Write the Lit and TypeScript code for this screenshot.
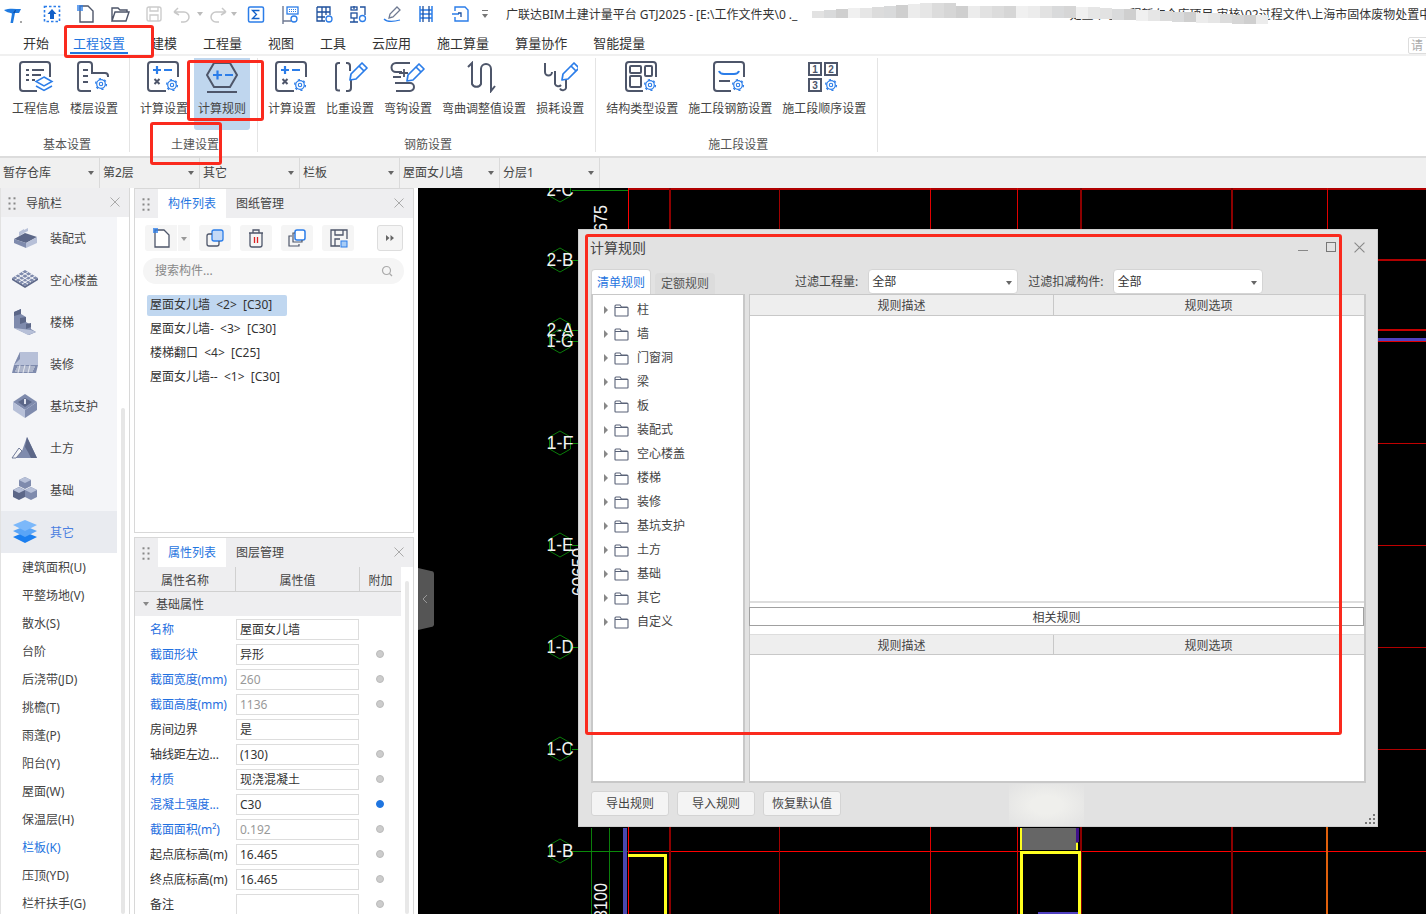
import { LitElement, html, css, svg } from "lit";
import { customElement } from "lit/decorators.js";

const D = "#4e566a";
const B = "#2b7de9";

const gear = (x: number, y: number) => svg`<g fill="none" stroke="${B}">
<circle cx="${x}" cy="${y}" r="1.7" stroke-width="1.1"/>
<circle cx="${x}" cy="${y}" r="4.3" stroke-width="1.2"/>
<circle cx="${x}" cy="${y}" r="5.4" stroke-width="1.4" stroke-dasharray="2.2 3.45"/></g>`;

const openBox = svg`<path d="M20 30H5a3 3 0 0 1-3-3V4a3 3 0 0 1 3-3h24a3 3 0 0 1 3 3v12" fill="none" stroke="${D}" stroke-width="2"/>`;
const pencil = (t: string) => svg`<g transform="${t}" fill="#fff" stroke="${B}" stroke-width="1.7" stroke-linejoin="round"><path d="M9 0l5 5L3 16l-6 1 1-6z"/><path d="M6 3l5 5"/></g>`;

const ribbonIcons: Record<string, unknown> = {
  info: svg`<path d="M19 30H5a3 3 0 0 1-3-3V4a3 3 0 0 1 3-3h24a3 3 0 0 1 3 3v12" fill="none" stroke="${D}" stroke-width="2"/>
    <path d="M8 9h3M14 9h12M8 14h3M14 14h9M8 19h3M14 19h3" stroke="${D}" stroke-width="1.8" fill="none"/>
    <path d="M26 16l8 4.5-8 4.5-8-4.5zM18 25l8 4.5 8-4.5" fill="#fff" stroke="${B}" stroke-width="1.5"/>`,
  floor: svg`<path d="M15 30H5a3 3 0 0 1-3-3V4a3 3 0 0 1 3-3h8a3 3 0 0 1 3 3v8h13a3 3 0 0 1 3 3v1" fill="none" stroke="${D}" stroke-width="2"/>
    <path d="M7 9h5M7 15h5M7 21h5" stroke="${D}" stroke-width="1.8"/>${gear(25, 23)}`,
  calc: svg`${openBox}<path d="M7 9h8M11 5v8M18 9h8" stroke="${B}" stroke-width="2.2"/>
    <path d="M8.5 18l5 5M13.5 18l-5 5" stroke="${D}" stroke-width="2"/>${gear(26, 24)}`,
  rule: svg`<path d="M10 2h16l7 12-7 12H10L3 14z" fill="none" stroke="${D}" stroke-width="2"/>
    <path d="M9 14h9M13.5 9.5v9M21 14h8" stroke="${B}" stroke-width="2.2"/>
    <path d="M3 31h30" stroke="${D}" stroke-width="2"/>`,
  weight: svg`<path d="M8 2H6.500A2.500 2.500 0 0 0 4 4.500V27a2.500 2.500 0 0 0 2.500 2.500H8M14 2h1a3 3 0 0 1 3 3v5M19 19v8a3 3 0 0 1-3 3h-2" fill="none" stroke="${D}" stroke-width="2"/>${pencil("translate(21 2)")}`,
  hook: svg`<path d="M20 2H6a3 3 0 0 0 0 9h6M3 16h8M5 22h15a3.500 3.500 0 0 1 0 8H6" fill="none" stroke="${D}" stroke-width="2"/>
    <path d="M14 8v8M9 12h9" stroke="${D}" stroke-width="1.800"/>${pencil("translate(20 3)")}`,
  bend: svg`<path d="M2 6l4-4v21a5 5 0 0 0 9 0V8a5 5 0 0 1 10 0v22l4-5" fill="none" stroke="${D}" stroke-width="2"/>`,
  loss: svg`<path d="M3 2v9a3.500 3.500 0 0 0 7 0M13 10v13a3.500 3.500 0 0 0 6 1M24 16v11a3.200 3.200 0 0 1-6 .500" fill="none" stroke="${D}" stroke-width="2"/>${pencil("translate(23 2)")}`,
  struct: svg`<path d="M19 30H5a3 3 0 0 1-3-3V4a3 3 0 0 1 3-3h24a3 3 0 0 1 3 3v12" fill="none" stroke="${D}" stroke-width="2"/>
    <rect x="6" y="5" width="11" height="7" rx="1" fill="none" stroke="${D}" stroke-width="2"/>
    <rect x="21" y="5" width="7" height="10" rx="1" fill="none" stroke="${D}" stroke-width="2"/>
    <rect x="6" y="15" width="11" height="11" rx="1" fill="none" stroke="${D}" stroke-width="2"/>${gear(26, 24)}`,
  rebar: svg`<path d="M19 30H5a3 3 0 0 1-3-3V4a3 3 0 0 1 3-3h24a3 3 0 0 1 3 3v12" fill="none" stroke="${D}" stroke-width="2"/>
    <path d="M7 10c1 3 3 3 5 3h10c2 0 4 0 5-3" fill="none" stroke="${B}" stroke-width="2"/>
    <path d="M7 20h11" stroke="${D}" stroke-width="2"/>${gear(26, 24)}`,
  order: svg`<g fill="none" stroke="${D}" stroke-width="2"><rect x="3" y="2" width="12" height="12"/><rect x="19" y="2" width="12" height="12"/><rect x="3" y="18" width="12" height="12"/></g>
    <g font-family="Liberation Sans, sans-serif" font-size="10" font-weight="700" fill="${D}" text-anchor="middle"><text x="9" y="12">1</text><text x="25" y="12">2</text><text x="9" y="28">3</text></g>${gear(25, 24)}`,
};

const ribbon = [
  { name: "基本设置", items: [["工程信息", "info"], ["楼层设置", "floor"]] },
  { name: "土建设置", items: [["计算设置", "calc"], ["计算规则", "rule"]] },
  { name: "钢筋设置", items: [["计算设置", "calc"], ["比重设置", "weight"], ["弯钩设置", "hook"], ["弯曲调整值设置", "bend"], ["损耗设置", "loss"]] },
  { name: "施工段设置", items: [["结构类型设置", "struct"], ["施工段钢筋设置", "rebar"], ["施工段顺序设置", "order"]] },
];

const G = "#6f7a92";
const quick: unknown[] = [
  svg`<rect x="2.500" y="2.500" width="15" height="15" fill="none" stroke="${B}" stroke-width="1.600" stroke-dasharray="2.500 2"/><path d="M10 5l4.500 5H12v5H8v-5H5.500z" fill="#1260c8"/>`,
  svg`<path d="M4 2h8l5 5v11H4z" fill="#fff" stroke="${D}" stroke-width="1.400"/><rect x="1" y="1" width="6" height="6" fill="${B}" opacity=".7"/>`,
  svg`<path d="M2 17V4h6l2 2h7v2M2 17l3-9h14l-3 9z" fill="none" stroke="${D}" stroke-width="1.400"/>`,
  svg`<rect x="3" y="3" width="14" height="14" rx="2" fill="none" stroke="#ccc" stroke-width="1.400"/><path d="M6 3v4h8V3M6 17v-6h8v6" fill="none" stroke="#ccc" stroke-width="1.300"/>`,
  svg`<path d="M1 8l4-4M1 8l5 3M1.500 8H11a5 5 0 0 1 0 10H8" fill="none" stroke="#c8c8c8" stroke-width="1.500"/>`,
  svg`<path d="M19 8l-4-4M19 8l-5 3M18.500 8H9a5 5 0 0 0 0 10h3" fill="none" stroke="#c8c8c8" stroke-width="1.500"/>`,
  svg`<rect x="2.500" y="3" width="15" height="15" rx="1.500" fill="none" stroke="${B}" stroke-width="1.500"/><path d="M13.500 6.500h-7l4 4-4 4h7" fill="none" stroke="#1260c8" stroke-width="1.300"/>`,
  svg`<path d="M3 2v15h8M3 17v3" fill="none" stroke="${G}" stroke-width="1.400"/><rect x="7" y="3" width="11" height="7" fill="none" stroke="${B}" stroke-width="1.300"/><path d="M9 5.500h7M9 7.500h7" stroke="${B}" stroke-width="1" stroke-dasharray="1 1"/><circle cx="14" cy="15" r="3" fill="none" stroke="${B}" stroke-width="1.300"/>`,
  svg`<path d="M3 3h13v8M3 3v14h8M3 8h13M3 13h8M8 3v14M12 3v8" fill="none" stroke="#1d4f9c" stroke-width="1.300"/><circle cx="15" cy="15" r="3" fill="none" stroke="${B}" stroke-width="1.300"/>`,
  svg`<g fill="none" stroke="#1d4f9c" stroke-width="1.300"><rect x="3" y="9" width="6" height="5"/><path d="M6 2v3M6 14v4M2 18h8"/><rect x="3" y="3" width="6" height="3"/><path d="M12 3h5v8"/></g><circle cx="14.500" cy="14.500" r="3" fill="none" stroke="${B}" stroke-width="1.300"/>`,
  svg`<path d="M2 15c3 3 9 3 16 1" fill="none" stroke="${B}" stroke-width="1.300"/><path d="M15 3l3 3-7 7-4 1 1-4z" fill="none" stroke="${G}" stroke-width="1.300"/>`,
  svg`<path d="M4 2v16M16 2v16M4 6h12M4 10h12M4 14h12" fill="none" stroke="${B}" stroke-width="1.500"/><path d="M7 2v16M13 2v16" stroke="#1d4f9c" stroke-width="1.300"/>`,
  svg`<path d="M5 7V3h10l3 3v11H5v-4M2 10h7" fill="none" stroke="${B}" stroke-width="1.400"/><path d="M11 13V9h-3" fill="none" stroke="#1d4f9c" stroke-width="1.300"/>`,
];

const A = "#b7c0d8", M = "#7f8bad", K = "#5c6788";
const navIcons: unknown[] = [
  svg`<path d="M7 8l5-3v4l-5 3zM12 6l4-2v3l-4 2z" fill="${A}"/><path d="M2 15l11-6 12 4-11 6z" fill="${K}"/><path d="M2 15v4l12 5v-5z" fill="${M}"/><path d="M25 13v6l-11 5v-5z" fill="${A}"/>`,
  svg`<path d="M13 4l13 8-13 8L0 12z" fill="${M}"/><path d="M0 12v2l13 8 13-8v-2l-13 8z" fill="${K}"/><path d="M6 8l13 8M10 6l13 8M3 10l13 8M20 8L7 16M16 6L3 14M23 10l-13 8" stroke="#f4f5f8" stroke-width="1"/>`,
  svg`<path d="M2 4l7-3v5l5 3v5l5 3v4l5 3-7 3L2 20z" fill="${M}"/><path d="M2 4l7-3v5l-7 2zM8 10l6-1v5l-6 2zM14 16l5-1v4l-5 2z" fill="${K}"/><path d="M2 20l14 7 8-3-5-2z" fill="${A}"/>`,
  svg`<path d="M8 2h18v13H2z" fill="${A}"/><path d="M2 15L8 2v7z" fill="${M}"/><path d="M2 15h24l-2 8H0z" fill="${M}"/><path d="M5 17h18M4 19h18M3 21h18M8 15l-2 8M13 15l-2 8M18 15l-2 8" stroke="#f4f5f8" stroke-width=".8"/>`,
  svg`<path d="M13 2l12 8-12 8L1 10z" fill="${M}"/><path d="M1 10v8l12 8V18z" fill="${A}"/><path d="M25 10v8l-12 8V18z" fill="${M}"/><path d="M13 6l7 4-7 5-7-5z" fill="${K}"/><path d="M12 7h2v5h-2z" fill="#dfe3ee"/>`,
  svg`<path d="M0 24l7-10 3 3 5-14 10 21z" fill="${M}"/><path d="M15 3l-2 10 3 5 3 6h6z" fill="${K}"/><path d="M0 24l7-10 3 3-6 7z" fill="#f4f5f8" stroke="${K}" stroke-width=".8"/>`,
  svg`<path d="M13 1l6 3v6l-6 3-6-3V4z" fill="${M}"/><path d="M7 11l6 3v7l-6 3-6-3v-7z" fill="${K}"/><path d="M19 11l6 3v7l-6 3-6-3v-7z" fill="${M}"/><path d="M13 1l6 3-6 3-6-3zM7 11l6 3-6 3-6-3zM19 11l6 3-6 3-6-3z" fill="${A}"/>`,
  svg`<path d="M13 14l12 5-12 6L1 19z" fill="#1c7fef"/><path d="M13 8l12 5-12 6L1 13z" fill="#5aa5f7"/><path d="M13 2l12 5-12 6L1 7z" fill="#7cb8fa"/>`,
];
const navItems = ["装配式", "空心楼盖", "楼梯", "装修", "基坑支护", "土方", "基础", "其它"];
const navSubs = ["建筑面积(U)", "平整场地(V)", "散水(S)", "台阶", "后浇带(JD)", "挑檐(T)", "雨蓬(P)", "阳台(Y)", "屋面(W)", "保温层(H)", "栏板(K)", "压顶(YD)", "栏杆扶手(G)"];

const tools: unknown[] = [
  svg`<path d="M5 3h9l5 5v12H5z" fill="#fff" stroke="${D}" stroke-width="1.300"/><rect x="3" y="1" width="5" height="5" fill="${B}" opacity=".75"/>`,
  svg`<rect x="8" y="3" width="11" height="11" rx="2" fill="#c4d9f6" stroke="${B}" stroke-width="1.300"/><path d="M8 7H5a2 2 0 0 0-2 2v8a2 2 0 0 0 2 2h8a2 2 0 0 0 2-2v-3" fill="none" stroke="${D}" stroke-width="1.300"/>`,
  svg`<path d="M4 6h14M8 6V3h6v3M5 6v12a2 2 0 0 0 2 2h8a2 2 0 0 0 2-2V6" fill="none" stroke="${D}" stroke-width="1.300"/><path d="M9.500 10v6M12.500 10v6" stroke="#d22" stroke-width="1.300"/>`,
  svg`<rect x="9" y="3" width="10" height="10" rx="2" fill="#fff" stroke="${B}" stroke-width="1.500"/><path d="M9 6H7v9h9v-2M6 9H3v10h10v-2" fill="none" stroke="${D}" stroke-width="1.200"/>`,
  svg`<path d="M20 12V3H4v16h9M8 3v5h8V3M8 19v-7h5" fill="none" stroke="${D}" stroke-width="1.300"/><rect x="14" y="14" width="6" height="6" fill="#a8ccf5" stroke="${B}"/>`,
];

const props: [string, string, boolean, string, string][] = [
  ["名称", "屋面女儿墙", true, "", "none"],
  ["截面形状", "异形", true, "", "off"],
  ["截面宽度(mm)", "260", true, "muted", "off"],
  ["截面高度(mm)", "1136", true, "muted", "off"],
  ["房间边界", "是", false, "", "none"],
  ["轴线距左边...", "(130)", false, "", "off"],
  ["材质", "现浇混凝土", true, "", "off"],
  ["混凝土强度...", "C30", true, "", "on"],
  ["截面面积(m²)", "0.192", true, "muted", "off"],
  ["起点底标高(m)", "16.465", false, "", "off"],
  ["终点底标高(m)", "16.465", false, "", "off"],
  ["备注", "", false, "", "off"],
];

const treeItems = ["柱", "墙", "门窗洞", "梁", "板", "装配式", "空心楼盖", "楼梯", "装修", "基坑支护", "土方", "基础", "其它", "自定义"];

const axes: [string, number][] = [["2-C", 190], ["2-B", 260], ["2-A", 330], ["1-G", 341], ["1-F", 443], ["1-E", 545], ["1-D", 647], ["1-C", 749], ["1-B", 851]];
const vLines: [number, string, number][] = [
  [628, "#ff0000", 1], [670, "#8c0000", 2], [779, "#a00000", 1], [930, "#e00000", 1], [1017, "#e00000", 1],
  [1081, "#8c0000", 2], [1232, "#8c0000", 2],
];
const hLines: [number, string, number][] = [
  [189, "#b00000", 2], [260, "#b00000", 2], [330, "#c80000", 2], [341, "#e00000", 1], [443, "#c00000", 1],
  [545, "#c00000", 1], [647, "#b00000", 1], [749, "#b00000", 1],
];
const smudge: [number, number, number, number, string][] = (() => {
  const out: [number, number, number, number, string][] = [];
  const shades = ["#e2e2e2", "#d6d6d6", "#ececec", "#dcdcdc", "#cfcfcf", "#e6e6e6", "#d9dadb", "#f0f0f0"];
  for (let x = 812, i = 0; x < 1260; x += 12, i++) {
    const top = x < 950 ? 11 - Math.min(8, (x - 812) / 14) : x < 1060 ? 6 : 6 + Math.min(9, (x - 1060) / 20);
    const bottom = x < 1060 ? 18 : 18 + Math.min(6, (x - 1060) / 30);
    out.push([x, top, 12, bottom - top, shades[(i * 5 + (i % 3)) % shades.length]]);
  }
  return out;
})();

@customElement("app-root")
export class AppRoot extends LitElement {
  static styles = css`
    :host { display: block; width: 1426px; height: 914px; position: relative; overflow: hidden; background: #fff; color: #333; font: 12px/16px "Noto Sans", "Noto Sans CJK SC", sans-serif; }
    * { box-sizing: border-box; }
    svg { display: block; flex: none; }
    .titlebar { height: 28px; display: flex; align-items: center; white-space: nowrap; overflow: hidden; position: relative; }
    .logo { width: 35px; flex: none; padding-left: 4px; }
    .qa { width: 34px; flex: none; display: flex; justify-content: center; align-items: center; }
    .qa.caret { justify-content: flex-start; padding-left: 2px; }
    .qa-caret { width: 0; height: 0; border: 3px solid transparent; border-top: 4px solid #bbb; border-bottom: 0; margin-left: 4px; }
    .qa-more { width: 16px; flex: none; display: flex; justify-content: center; }
    .title { margin-left: 13px; font-size: 12px; flex: none; padding-top: 2px; }
    .title-gap { display: inline-block; width: 272px; }
    .smudge { position: absolute; left: 0; top: 0; }
    .tabs { height: 28px; display: flex; gap: 26px; padding: 2px 0 0 23px; border-bottom: 2px solid #f0f0f0; font-size: 13px; line-height: 26px; position: relative; }
    .tab { position: relative; }
    .tab:first-child { margin-right: -2px; }
    .tab.on { color: #1f75e0; }
    .tab.on::after { content: ""; position: absolute; left: -3px; right: -3px; bottom: 0; height: 2px; background: #1f75e0; }
    .req { position: absolute; right: -8px; top: 9px; width: 26px; height: 17px; border: 1px solid #ddd; border-radius: 2px; color: #aaa; font-size: 12px; line-height: 15px; padding-left: 2px; overflow: hidden; }
    .ribbon { height: 100px; display: flex; padding-top: 2px; }
    .group { display: flex; flex-direction: column; height: 94px; padding: 0 11px 0 10px; border-right: 1px solid #e4e4e4; align-items: center; }
    .group:first-child { padding-left: 12px; }
    .btns { display: flex; gap: 10px; height: 72px; flex: none; }
    .rb { display: flex; flex-direction: column; align-items: center; padding-top: 3px; white-space: nowrap; height: 72px; width: max-content; color: #444; }
    .rb svg { margin-bottom: 8px; margin-left: -1px; }
    .rb.sel { background: #bfd6ee; border-radius: 0 0 3px 3px; margin: 0 -4px; padding: 3px 4px 0; }
    .glabel { margin: 5px 0 0 4px; line-height: 20px; color: #555; }
    .selectors { height: 32px; background: #f0f0f0; border-top: 2px solid #dcdcdc; display: flex; }
    .sel-cell { width: 100px; border-right: 1px solid #dadada; padding-left: 3px; line-height: 29px; position: relative; color: #444; }
    .arrow { position: absolute; width: 0; height: 0; border: 3px solid transparent; border-top: 4px solid #666; border-bottom: 0; right: 5px; top: 13px; }
    .main { height: 726px; display: flex; }
    .nav { width: 130px; flex: none; border-left: 1px solid #e2e2e2; border-right: 1px solid #d8d8d8; position: relative; overflow: hidden; }
    .phead { height: 29px; background: #eeeef0; display: flex; align-items: center; position: relative; color: #444; }
    .grip { width: 23px; flex: none; padding-left: 6px; }
    .x { position: absolute; right: 9px; top: 9px; }
    .nav-title { padding: 2px 0 0 2px; }
    .nav-list { width: 116px; }
    .nav-item { height: 42px; background: #f4f5f8; display: flex; align-items: center; padding-left: 10px; gap: 11px; color: #444; }
    .nav-txt { padding-top: 2px; }
    .nav-item.on { background: #e9ebf0; color: #4b7fe0; }
    .nav-sub { height: 28px; line-height: 30px; padding-left: 21px; color: #444; }
    .nav-sub.on { color: #1f75e0; }
    .nscroll { position: absolute; left: 120px; top: 220px; bottom: 0; width: 4px; background: #e6e6e6; border-radius: 2px; }
    .side { width: 280px; margin-left: 4px; flex: none; display: flex; flex-direction: column; gap: 4px; }
    .panel { border: 1px solid #d8d8d8; border-top-width: 1px; position: relative; overflow: hidden; }
    .comp { height: 345px; flex: none; }
    .prop { flex: 1; border-bottom: 0; }
    .ptab { width: 68px; height: 100%; text-align: center; line-height: 30px; background: #fff; color: #1f75e0; }
    .ptab.off { background: none; color: #444; width: 68px; }
    .toolbar { display: flex; gap: 9px; padding: 7px 0 0 10px; height: 33px; }
    .tb { width: 32px; height: 26px; background: #f5f5f5; border-radius: 3px; display: flex; align-items: center; justify-content: center; }
    .tb-new { border-radius: 3px 0 0 3px; }
    .tb-drop { width: 12px; height: 26px; background: #f5f5f5; margin-left: -8px; position: relative; }
    .tb-drop .arrow { right: 3px; top: 12px; border-top-color: #999; }
    .tb-more { width: 26px; margin-left: 14px; border: 1px solid #ddd; }
    .search { margin: 7px 9px 0 8px; height: 26px; background: #f5f5f5; border-radius: 13px; display: flex; justify-content: space-between; align-items: center; padding: 0 11px 0 12px; color: #888; }
    .clist { padding-top: 9px; padding-left: 12px; }
    .crow { height: 24px; line-height: 23px; }
    .crow span { display: inline-block; height: 21px; line-height: 20px; padding: 0 3px; border-radius: 2px; white-space: pre; }
    .crow.on span { background: #c0d7f0; min-width: 140px; }
    .pt-head { display: flex; height: 25px; width: 266px; background: #eeeef0; border-bottom: 1px solid #d0d0d0; line-height: 27px; text-align: center; color: #444; }
    .pt-head div { border-right: 1px solid #d0d0d0; }
    .c1 { width: 101px; } .c2 { width: 124px; } .c3 { width: 41px; border-right: 0 !important; }
    .pgroup { width: 266px; height: 24px; background: #eeeef0; line-height: 26px; padding-left: 21px; position: relative; color: #444; }
    .pgroup .arrow { left: 8px; top: 10px; border-top-color: #888; }
    .prows { padding-top: 1px; }
    .prow { display: flex; height: 25px; width: 266px; align-items: center; }
    .plabel { width: 101px; padding-left: 15px; white-space: nowrap; flex: none; letter-spacing: -.1px; }
    .plabel.blue { color: #1f6fe0; }
    .pval { width: 123px; height: 21px; border: 1px solid #ddd; line-height: 19px; padding-left: 3px; flex: none; }
    .pval.muted { color: #999; }
    .dot { width: 8px; height: 8px; border-radius: 50%; margin: -1px 0 0 17px; background: #ccc; border: 1px solid #bbb; }
    .dot.on { background: #1f75e0; border-color: #1f75e0; }
    .dot.none { visibility: hidden; }
    .pscroll { position: absolute; left: 270px; top: 43px; bottom: 0; width: 4px; background: #e8e8e8; border-radius: 2px; }
    .canvas { position: absolute; left: 418px; top: 188px; width: 1008px; height: 726px; background: #000; overflow: hidden; }
    .handle { position: absolute; left: 0; top: 380px; }
    .dialog { position: absolute; left: 160px; top: 41px; width: 800px; height: 598px; background: #e2e2e2; border: 1px solid #cfcfcf; display: flex; flex-direction: column; padding: 0 12px; }
    .patch { position: absolute; left: 430px; bottom: 0; width: 75px; height: 42px; background: radial-gradient(ellipse at center, #efefec 30%, #e2e2e2 100%); }
    .dtitle { height: 38px; flex: none; display: flex; align-items: center; font-size: 14px; color: #444; position: relative; margin-left: -1px; padding-bottom: 2px; }
    .wctl { position: absolute; right: 0; top: 12px; display: flex; gap: 18px; }
    .dfilter { height: 26px; flex: none; display: flex; align-items: flex-end; color: #444; }
    .dtab { width: 60px; height: 25px; background: #fff; border-radius: 4px 4px 0 0; text-align: center; line-height: 26px; color: #1f75e0; border: 1px solid #d4d4d4; border-bottom: 0; }
    .dtab.off { height: 21px; line-height: 22px; background: #dcdcdc; color: #555; border: 0; margin-left: 4px; }
    .flabel { margin-left: 80px; height: 26px; line-height: 28px; white-space: nowrap; }
    .flabel.second { margin-left: 10px; }
    .fsel { width: 150px; height: 25px; margin-left: 10px; background: #fff; border: 1px solid #d4d4d4; border-radius: 4px; padding-left: 3px; line-height: 24px; position: relative; color: #333; }
    .fsel .arrow { right: 5px; top: 11px; }
    .dbody { height: 489px; flex: none; display: flex; gap: 4px; }
    .tree { width: 154px; flex: none; background: #fff; border: 2px solid #c8c8c8; border-top-width: 1px; padding-top: 3px; }
    .trow { height: 24px; display: flex; align-items: center; padding-left: 11px; gap: 6px; color: #444; }
    .tri { width: 0; height: 0; border: 4px solid transparent; border-left: 4px solid #888; border-right: 0; }
    .tree-txt { margin-left: 2px; }
    .rpanel { width: 617px; flex: none; background: #fff; border: 2px solid #c8c8c8; border-top-width: 1px; border-left-width: 1px; display: flex; flex-direction: column; }
    .rhead { height: 21px; flex: none; display: flex; background: #eeeeee; border-bottom: 1px solid #c8c8c8; text-align: center; line-height: 22px; color: #444; }
    .rhead div:first-child { width: 304px; border-right: 1px solid #c8c8c8; flex: none; }
    .rhead div:last-child { flex: 1; margin-right: 1px; }
    .rbody { height: 287px; flex: none; border-bottom: 2px solid #ddd; }
    .related { height: 19px; flex: none; margin: 4px 0 0 -1px; border: 1px solid #a0a0a0; text-align: center; line-height: 19px; color: #444; }
    .rhead.two { margin-top: 8px; border-top: 1px solid #ddd; line-height: 21px; }
    .dfoot { display: flex; gap: 8px; margin-top: 8px; flex: none; }
    .dbtn { width: 78px; height: 25px; background: #f4f4f4; border: 1px solid #d4d4d4; border-radius: 3px; text-align: center; line-height: 24px; color: #444; }
    .dgrip { position: absolute; right: 2px; bottom: 2px; }
    .ann { position: absolute; border: 3px solid #fa2a1e; border-radius: 3px; pointer-events: none; }
    .a1 { left: 64px; top: 25px; width: 90px; height: 33px; }
    .a2 { left: 187px; top: 60px; width: 77px; height: 61px; }
    .a3 { left: 150px; top: 122px; width: 72px; height: 43px; }
    .a4 { left: 585px; top: 234px; width: 757px; height: 501px; }
  `;

  private x(size = 10, c = "#aaa") {
    return html`<svg width="${size}" height="${size}" viewBox="0 0 10 10"><path d="M.5.5l9 9M9.500.5l-9 9" stroke="${c}" stroke-width="1" fill="none"/></svg>`;
  }
  private grip() {
    const dots = [1, 5, 9].flatMap((y) => [1.5, 6.5].map((x) => svg`<rect x="${x}" y="${y * 1.3}" width="2" height="2" fill="#888"/>`));
    return html`<div class="grip"><svg width="10" height="14">${dots}</svg></div>`;
  }

  private renderCanvas() {
    return html`<svg width="1008" height="726" viewBox="418 188 1008 726" fill="none">
      <g shape-rendering="crispEdges">
        ${hLines.map(([y, c, w]) => svg`<path d="M628 ${y}H1426" stroke="${c}" stroke-width="${w}"/>`)}
        <path d="M628 339.500H1426" stroke="#5040c0" stroke-width="3"/>
        <path d="M628 851H1426" stroke="#ff0000"/>
        ${vLines.map(([x, c, w]) => svg`<path d="M${x} 188V914" stroke="${c}" stroke-width="${w}"/>`)}
        <path d="M1327 188V600" stroke="#e00000"/><path d="M1327 820V914" stroke="#e0600c" stroke-width="2"/>
        <path d="M591 828V914M609 828V914" stroke="#0a7d0a"/>
        ${axes.map(([, y]) => svg`<path d="M572 ${y}H${y === 851 || y === 190 ? 628 : 610}" stroke="#0a8a0a"/>`)}
        <rect x="1021" y="828" width="57" height="22" fill="#666"/>
        <path d="M1021 828V850" stroke="#ffff20" stroke-width="2"/>
        <path d="M1077 828V842" stroke="#40108a" stroke-width="3"/><path d="M1077 843V850" stroke="#ffff20" stroke-width="2"/>
        <path d="M625 828V914" stroke="#4a48b0" stroke-width="4"/>
        <path d="M628 855H665.500V914" stroke="#ffff20" stroke-width="3"/>
        <path d="M1021.500 914V852.500H1079.500V914" stroke="#ffff20" stroke-width="3"/>
        <path d="M1038 913H1078" stroke="#5040c0" stroke-width="2"/>
      </g>
      ${axes.map(([t, y]) => svg`
        <path d="M560 ${y - 12}l10.500 6v12l-10.500 6-10.500-6v-12z" stroke="#0a7d0a"/>
        <text x="560" y="${y + 6}" text-anchor="middle" fill="#f2f2f2" font-family="Liberation Sans, sans-serif" font-size="18" textLength="27" lengthAdjust="spacingAndGlyphs">${t}</text>`)}
      <g fill="#f2f2f2" font-family="Liberation Sans, sans-serif" font-size="19">
        <text transform="translate(607 232) rotate(-90)" textLength="27" lengthAdjust="spacingAndGlyphs">675</text>
        <text transform="translate(607 919) rotate(-90)" textLength="36" lengthAdjust="spacingAndGlyphs">3100</text>
        <text transform="translate(585 596) rotate(-90)" textLength="48" lengthAdjust="spacingAndGlyphs">60650</text>
      </g>
    </svg>`;
  }

  private renderDialog() {
    const folder = html`<svg width="15" height="13" viewBox="0 0 15 13"><path d="M1 11.500V2a1 1 0 0 1 1-1h4l1.500 2H13a1 1 0 0 1 1 1v7.500a.5.5 0 0 1-.5.5h-12a.5.5 0 0 1-.5-.5zM1 3.500h13" fill="none" stroke="#5a6378" stroke-width="1.100"/></svg>`;
    const head = (cls = "") => html`<div class="rhead ${cls}"><div>规则描述</div><div>规则选项</div></div>`;
    const gd = [[8, 0], [4, 4], [8, 4], [0, 8], [4, 8], [8, 8]];
    return html`<div class="dialog">
      <div class="patch"></div>
      <div class="dtitle">计算规则
        <div class="wctl">
          <svg width="10" height="11"><path d="M0 8.500h10" stroke="#888"/></svg>
          <svg width="10" height="11"><rect x=".5" y=".5" width="9" height="9" fill="none" stroke="#777"/></svg>
          <svg width="11" height="11" viewBox="0 0 10 10"><path d="M.5.5l9 9M9.500.5l-9 9" stroke="#888" fill="none"/></svg>
        </div>
      </div>
      <div class="dfilter">
        <div class="dtab">清单规则</div><div class="dtab off">定额规则</div>
        <div class="flabel">过滤工程量:</div><div class="fsel">全部<i class="arrow"></i></div>
        <div class="flabel second">过滤扣减构件:</div><div class="fsel">全部<i class="arrow"></i></div>
      </div>
      <div class="dbody">
        <div class="tree">${treeItems.map((t) => html`<div class="trow"><i class="tri"></i>${folder}<span class="tree-txt">${t}</span></div>`)}</div>
        <div class="rpanel">
          ${head()}<div class="rbody"></div>
          <div class="related">相关规则</div>
          ${head("two")}
        </div>
      </div>
      <div class="dfoot"><div class="dbtn">导出规则</div><div class="dbtn">导入规则</div><div class="dbtn">恢复默认值</div></div>
      <svg class="dgrip" width="10" height="10">${gd.map(([x, y]) => svg`<rect x="${x}" y="${y}" width="2" height="2" fill="#777"/>`)}</svg>
    </div>`;
  }

  render() {
    const qa = quick.map((q, i) => html`<div class="qa ${i === 4 || i === 5 ? "caret" : ""}"><svg width="20" height="20" viewBox="0 0 20 20">${q}</svg>${i === 4 || i === 5 ? html`<i class="qa-caret"></i>` : ""}</div>`);
    return html`
      <div class="titlebar">
        <div class="logo"><svg width="24" height="20" viewBox="0 0 24 20"><path d="M0 6C5 4 11 5 17 5l-2 4h-4L9 19H6.500L8 9.500C5 8.500 2 8 0 6z" fill="#1f7ae0"/><path d="M11 6l-2 3h2l1-3z" fill="#0e4fa8"/><circle cx="17" cy="18" r="1" fill="#888"/></svg></div>
        ${qa}
        <div class="qa-more"><svg width="8" height="10" viewBox="0 0 8 10"><path d="M1 1.500h6" stroke="#777"/><path d="M1 5h6L4 9z" fill="#777"/></svg></div>
        <div class="title">广联达BIM土建计量平台 GTJ2025 - [E:\\工作文件夹\\0 ._<span class="title-gap"></span>处置中心工程暂存仓库项目 审核\\02过程文件\\上海市固体废物处置中心工程</div>
        <svg class="smudge" width="1426" height="28" shape-rendering="crispEdges">${smudge.map(([x, y, w, h, c]) => svg`<rect x="${x}" y="${y}" width="${w}" height="${h}" fill="${c}"/>`)}</svg>
      </div>
      <div class="tabs">
        ${["开始", "工程设置", "建模", "工程量", "视图", "工具", "云应用", "施工算量", "算量协作", "智能提量"].map((t, i) => html`<div class="tab ${i === 1 ? "on" : ""}">${t}</div>`)}
        <div class="req">请输</div>
      </div>
      <div class="ribbon">
        ${ribbon.map((g) => html`<div class="group">
          <div class="btns">${g.items.map(([t, ic]) => html`<div class="rb ${ic === "rule" ? "sel" : ""}"><svg width="36" height="32" viewBox="0 0 36 32">${ribbonIcons[ic]}</svg>${t}</div>`)}</div>
          <div class="glabel">${g.name}</div>
        </div>`)}
      </div>
      <div class="selectors">
        ${["暂存仓库", "第2层", "其它", "栏板", "屋面女儿墙", "分层1"].map((t) => html`<div class="sel-cell">${t}<i class="arrow"></i></div>`)}
      </div>
      <div class="main">
        <div class="nav">
          <div class="phead">${this.grip()}<span class="nav-title">导航栏</span><div class="x">${this.x()}</div></div>
          <div class="nav-list">
            ${navItems.map((t, i) => html`<div class="nav-item ${i === 7 ? "on" : ""}"><svg width="28" height="28" viewBox="0 0 26 28">${navIcons[i]}</svg><span class="nav-txt">${t}</span></div>`)}
          </div>
          ${navSubs.map((t) => html`<div class="nav-sub ${t === "栏板(K)" ? "on" : ""}">${t}</div>`)}
          <div class="nscroll"></div>
        </div>
        <div class="side">
          <div class="panel comp">
            <div class="phead">${this.grip()}<div class="ptab">构件列表</div><div class="ptab off">图纸管理</div><div class="x">${this.x()}</div></div>
            <div class="toolbar">
              <div class="tb tb-new"><svg width="22" height="22">${tools[0]}</svg></div>
              <div class="tb-drop"><i class="arrow"></i></div>
              ${tools.slice(1).map((t) => html`<div class="tb"><svg width="22" height="22">${t}</svg></div>`)}
              <div class="tb tb-more"><svg width="10" height="8" viewBox="0 0 10 8"><path d="M1 1l3.500 3L1 7zM5.500 1L9 4 5.500 7z" fill="#666"/></svg></div>
            </div>
            <div class="search">搜索构件...<svg width="12" height="12" viewBox="0 0 12 12"><circle cx="5.500" cy="5.500" r="4" fill="none" stroke="#aaa" stroke-width="1.200"/><path d="M8.500 8.500l2.500 2.500" stroke="#aaa" stroke-width="1.200"/></svg></div>
            <div class="clist">
              <div class="crow on"><span>屋面女儿墙  &lt;2&gt;  [C30]</span></div>
              <div class="crow"><span>屋面女儿墙-  &lt;3&gt;  [C30]</span></div>
              <div class="crow"><span>楼梯翻口  &lt;4&gt;  [C25]</span></div>
              <div class="crow"><span>屋面女儿墙--  &lt;1&gt;  [C30]</span></div>
            </div>
          </div>
          <div class="panel prop">
            <div class="phead">${this.grip()}<div class="ptab">属性列表</div><div class="ptab off">图层管理</div><div class="x">${this.x()}</div></div>
            <div class="pt-head"><div class="c1">属性名称</div><div class="c2">属性值</div><div class="c3">附加</div></div>
            <div class="pgroup"><i class="arrow"></i>基础属性</div>
            <div class="prows">
            ${props.map(([l, v, blue, m, d]) => html`<div class="prow"><div class="plabel ${blue ? "blue" : ""}">${l}</div><div class="pval ${m}">${v}</div><div class="dot ${d}"></div></div>`)}
            </div>
            <div class="pscroll"></div>
          </div>
        </div>
      </div>
      <div class="canvas">
        ${this.renderCanvas()}
        <svg class="handle" width="16" height="62" viewBox="0 0 16 62"><path d="M0 0l13 3a3 3 0 0 1 3 3v51a3 3 0 0 1-3 2L0 62z" fill="#555"/><path d="M9 27l-4 4 4 4" fill="none" stroke="#999"/></svg>
        ${this.renderDialog()}
      </div>
      <div class="ann a1"></div><div class="ann a2"></div><div class="ann a3"></div><div class="ann a4"></div>
    `;
  }
}
